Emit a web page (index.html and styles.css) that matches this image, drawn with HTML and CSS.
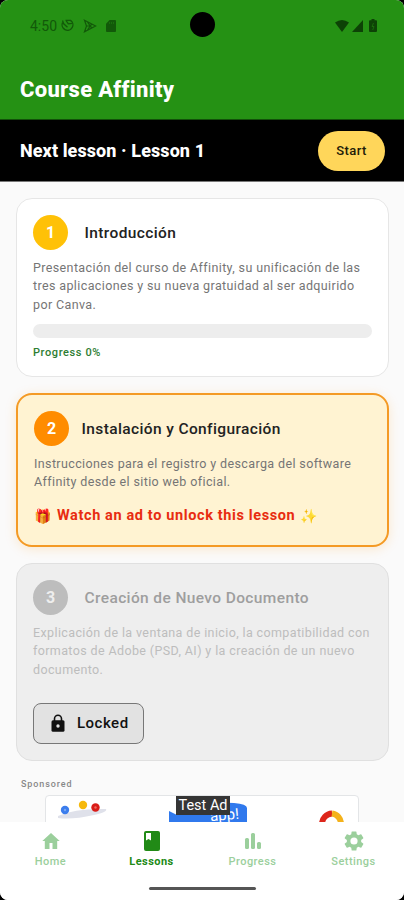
FILE: index.html
```html
<!DOCTYPE html>
<html lang="es">
<head>
<meta charset="utf-8">
<title>Course Affinity</title>
<link rel="stylesheet" href="styles.css">
</head>
<body>
<div class="phone">
  <header class="header">
    <div class="status">
      <span class="time">4:50</span>
      <svg class="st-clock" width="13" height="13" viewBox="0 0 13 13"><path d="M4.500 1.400H9.500A5.400 5.400 0 1 1 1.600 3.600M1.500 1.500l1.200 3.300 3.800 3.400M5 1.500l2.300 3.400 3.700-.600" fill="none" stroke="currentColor" stroke-width="1.300"/></svg>
      <svg class="st-play" width="14" height="14" viewBox="0 0 14 14"><path d="M1.500 1.200 12.600 7 1.500 12.800l2-5.800zM3.500 7h5M4.500 3l4 6M4.500 11l4-6" fill="none" stroke="currentColor" stroke-width="1.2"/></svg>
      <svg class="st-sd" width="10" height="12" viewBox="0 0 10 12"><path d="M3.600 0H9a1 1 0 0 1 1 1v10a1 1 0 0 1-1 1H1a1 1 0 0 1-1-1V3.700z" fill="currentColor"/><path d="M3.500 2v2M5.500 2v2M7.500 2v2" stroke="#259114" stroke-width=".8" opacity=".5"/></svg>
      <span class="camera"></span>
      <span class="signals">
        <svg width="14" height="12" viewBox="0 0 14 12"><path d="M0 2.500Q7-2.500 14 2.500L7 12z" fill="currentColor"/></svg>
        <svg width="11" height="12" viewBox="0 0 11 12"><path d="M11 0v12H0z" fill="currentColor"/></svg>
        <svg class="st-battery" width="8" height="13" viewBox="0 0 8 13"><path d="M2.500 0h3v1.300H7a1 1 0 0 1 1 1V12a1 1 0 0 1-1 1H1a1 1 0 0 1-1-1V2.300a1 1 0 0 1 1-1h1.500z" fill="currentColor"/><path d="M4.500 4 3 7.500h2L3.700 11" fill="none" stroke="#259114" stroke-width=".8" opacity=".6"/></svg>
      </span>
    </div>
    <h1>Course Affinity</h1>
  </header>
  <section class="next">
    <span class="next-title">Next lesson · Lesson 1</span>
    <button class="start">Start</button>
  </section>
  <main class="lessons">
    <article class="card">
      <div class="card-head"><span class="num">1</span><h2>Introducción</h2></div>
      <p class="desc">Presentación del curso de Affinity, su unificación de las<br>tres aplicaciones y su nueva gratuidad al ser adquirido<br>por Canva.</p>
      <div class="track"></div>
      <div class="progress">Progress 0%</div>
    </article>
    <article class="card unlock">
      <div class="card-head"><span class="num">2</span><h2>Instalación y Configuración</h2></div>
      <p class="desc">Instrucciones para el registro y descarga del software<br>Affinity desde el sitio web oficial.</p>
      <div class="watch"><span class="emoji">🎁</span><span class="watch-text">Watch an ad to unlock this lesson</span><span class="emoji">✨</span></div>
    </article>
    <article class="card locked">
      <div class="card-head"><span class="num">3</span><h2>Creación de Nuevo Documento</h2></div>
      <p class="desc">Explicación de la ventana de inicio, la compatibilidad con<br>formatos de Adobe (PSD, AI) y la creación de un nuevo<br>documento.</p>
      <button class="lock-btn"><svg width="14" height="18" viewBox="0 0 14 18"><path d="M3.500 7V4.700a3.500 3.500 0 0 1 7 0V7" fill="none" stroke="#111" stroke-width="1.600"/><rect x=".5" y="6.300" width="13" height="11.400" rx="1.500" fill="#111"/><circle cx="7" cy="12" r="1.700" fill="#e2e2e2"/></svg>Locked</button>
    </article>
    <div class="sponsored">Sponsored</div>
    <div class="ad">
      <svg class="ad-art" width="314" height="27" viewBox="0 0 314 27">
        <path d="M12 20Q30 12 60 13q2 3-12 6-22 5-36 3z" fill="#dfe1ea"/>
        <circle cx="19" cy="14" r="4.200" fill="#3b7ded"/><circle cx="37" cy="9" r="4.200" fill="#f6b90c"/><circle cx="49.500" cy="11.500" r="4.200" fill="#d91c18"/>
        <circle cx="19" cy="14" r="1.200" fill="#76a6f3"/><circle cx="49.500" cy="11.500" r="1.200" fill="#f06a60"/>
        <path d="M123 27V15l8 4q28-14 57-12 13 1 13 5v15z" fill="#3079ed"/>
        <path d="M276 28a10.500 10.500 0 0 1 10-10.500" fill="none" stroke="#dd261b" stroke-width="6"/><path d="M286 17.500A10.500 10.500 0 0 1 295 28" fill="none" stroke="#f4b21b" stroke-width="6"/>
      </svg>
      <span class="ad-word">app!</span>
      <span class="ad-tag">Test Ad</span>
    </div>
  </main>
  <nav class="nav">
    <div class="tabs">
      <div class="tab"><svg width="24" height="24" viewBox="0 0 24 24"><path d="M10.500 20v-6h3v6h4.700v-8h2.500L12 4 3.300 12h2.500v8z"/></svg><span>Home</span></div>
      <div class="tab active"><svg width="24" height="24" viewBox="0 0 24 24"><path d="M18 2H6a2 2 0 0 0-2 2v16a2 2 0 0 0 2 2h12a2 2 0 0 0 2-2V4a2 2 0 0 0-2-2z"/><path d="M6 4h5v7.500L8.500 10 6 11.500z" fill="#fff"/></svg><span>Lessons</span></div>
      <div class="tab"><svg width="24" height="24" viewBox="0 0 24 24"><rect x="4" y="9" width="4" height="11" rx="1.500"/><rect x="10" y="4" width="4" height="16" rx="1.500"/><rect x="16" y="13" width="4" height="7" rx="1.500"/></svg><span>Progress</span></div>
      <div class="tab"><svg width="24" height="24" viewBox="0 0 24 24"><path d="M19.140 12.940c.04-.3.060-.61.060-.94s-.02-.64-.07-.94l2.030-1.580a.49.49 0 0 0 .12-.61l-1.920-3.320a.49.49 0 0 0-.59-.22l-2.390.96a7 7 0 0 0-1.620-.94l-.36-2.540a.48.48 0 0 0-.48-.41h-3.840a.47.47 0 0 0-.47.410l-.36 2.540a7.300 7.300 0 0 0-1.620.94l-2.390-.96a.48.48 0 0 0-.59.220L2.740 8.870a.47.47 0 0 0 .12.610l2.030 1.580a6 6 0 0 0 0 1.880l-2.030 1.580a.49.49 0 0 0-.12.610l1.920 3.320c.12.220.37.290.59.220l2.390-.96c.5.380 1.030.7 1.620.94l.36 2.540c.05.240.24.410.48.410h3.840c.24 0 .44-.17.470-.41l.36-2.540a7.300 7.300 0 0 0 1.620-.94l2.390.96c.22.080.47 0 .59-.22l1.920-3.320a.47.47 0 0 0-.12-.61zM12 15.600a3.600 3.600 0 1 1 0-7.200 3.600 3.600 0 0 1 0 7.200z"/></svg><span>Settings</span></div>
    </div>
    <div class="handle"></div>
  </nav>
</div>
</body>
</html>
```

FILE: styles.css
```css
* { box-sizing: border-box; }
body { margin: 0; background: #000; font-family: Roboto, "Liberation Sans", sans-serif; }
h1, h2, p { margin: 0; }
button { font-family: inherit; }
.phone { width: 404px; height: 900px; display: flex; flex-direction: column; overflow: hidden; background: #fafafa; clip-path: inset(0 round 8px); }
.header { flex: none; height: 120px; background: #259114; border-bottom: 1px solid #12500a; color: #fff; }
.status { position: relative; display: flex; align-items: center; height: 51px; padding-left: 30px; color: #125909; }
.time { width: 31px; font-size: 14px; line-height: 16px; }
.st-play { margin-left: 9px; }
.st-sd { margin-left: 9px; }
.camera { position: absolute; left: 190px; top: 12px; width: 25px; height: 25px; border-radius: 50%; background: #000; }
.signals { display: flex; align-items: center; gap: 3px; margin-left: auto; margin-right: 27px; color: #0d4206; }
.st-battery { margin-left: 3px; }
h1 { padding: 24px 0 0 20px; font-size: 22px; line-height: 30px; font-weight: 800; letter-spacing: .3px; }
.next { flex: none; height: 62px; display: flex; align-items: center; justify-content: space-between; padding: 0 19px 0 20px; background: #000; border-bottom: 1px solid #777; color: #fff; }
.next-title { font-size: 18px; font-weight: 800; letter-spacing: .08px; }
.start { width: 67px; height: 40px; border: 0; border-radius: 20px; padding: 0; background: #ffd65a; color: #221b08; font-size: 13px; font-weight: 500; letter-spacing: .4px; }
.lessons { flex: 1; min-height: 0; overflow: hidden; display: flex; flex-direction: column; padding: 16px 15px 0 16px; }
.card { flex: none; height: 179px; margin-bottom: 16px; padding: 16px; border: 1px solid #e6e6e6; border-radius: 16px; background: #fff; }
.card-head { display: flex; align-items: center; height: 35px; }
.num { flex: none; width: 35px; height: 35px; border-radius: 50%; background: #ffc107; color: #fff; font-size: 16px; font-weight: 700; line-height: 35px; text-align: center; }
h2 { margin-left: 16.500px; font-size: 15.500px; font-weight: 500; line-height: 20px; color: #222; letter-spacing: .38px; white-space: nowrap; }
.desc { margin-top: 8.500px; font-size: 12.500px; line-height: 18.700px; color: #757575; letter-spacing: .38px; white-space: nowrap; }
.track { width: 339px; height: 14px; margin-top: 9.500px; border-radius: 7px; background: #ededed; }
.progress { margin-top: 8px; font-size: 11px; line-height: 14px; font-weight: 500; color: #2e7d32; letter-spacing: .6px; }
.unlock { position: relative; height: 154px; border: 2px solid #f49a25; background: #fff3d2; box-shadow: 0 2px 12px rgba(255, 152, 0, .18); }
.unlock .num { background: #ff8c00; }
.unlock h2 { margin-left: 12.500px; }
.watch { display: flex; align-items: center; gap: 6px; margin-top: 14px; height: 20px; color: #e82c10; font-size: 14.500px; font-weight: 700; }
.watch-text { letter-spacing: .62px; margin-right: -1px; white-space: nowrap; }
.emoji { width: 17px; font-size: 14px; line-height: 20px; }
.locked { position: relative; height: 198px; background: #eee; border-color: #e0e0e0; }
.locked .num { background: #bdbdbd; color: #eee; }
.locked h2 { color: #9e9e9e; }
.locked .desc { color: #bdbdbd; }
.lock-btn { display: flex; align-items: center; gap: 12px; width: 111px; height: 41px; margin-top: 23px; padding: 0 0 0 17px; border: 1px solid #777; border-radius: 8px; background: #e2e2e2; color: #111; font-size: 15px; font-weight: 500; letter-spacing: .5px; }
.sponsored { flex: none; padding-left: 5px; height: 18px; font-size: 9px; line-height: 15px; font-weight: 500; color: #888; letter-spacing: .9px; }
.ad { flex: none; position: relative; width: 314px; height: 60px; margin-left: 29px; border: 1px solid #e3e5e7; border-radius: 4px; background: #fff; }
.ad-art { display: block; }
.ad-word { position: absolute; left: 164px; top: 9px; color: #fff; font-size: 15px; line-height: 20px; transform: rotate(-5deg); }
.ad-tag { position: absolute; left: 130px; top: 0; width: 54px; height: 19px; background: #353535; color: #fff; font-size: 14.500px; line-height: 20px; text-align: center; white-space: nowrap; }
.nav { flex: none; position: relative; height: 78px; background: #fff; }
.tabs { display: flex; padding-top: 7px; }
.tab { flex: 1; display: flex; flex-direction: column; align-items: center; color: #9bcf9c; fill: #9bcf9c; font-size: 11px; line-height: 14px; font-weight: 500; letter-spacing: .45px; }
.tab span { margin-top: 2px; }
.active { color: #218a16; fill: #218a16; font-weight: 700; }
.handle { position: absolute; left: 149px; bottom: 10px; width: 107px; height: 3px; border-radius: 2px; background: #555; }
```
